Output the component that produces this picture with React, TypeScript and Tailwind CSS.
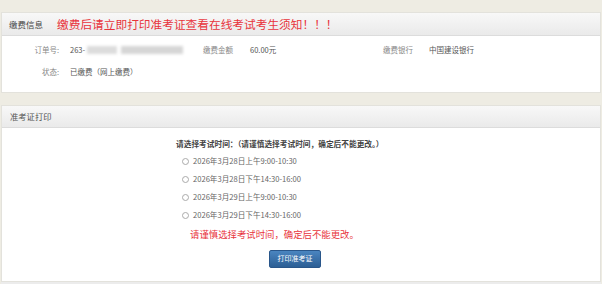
import React from "react";

const font = { fontFamily: '"Noto Sans CJK SC", "Noto Sans", sans-serif' };

const options = [
  "2026年3月28日上午9:00-10:30",
  "2026年3月28日下午14:30-16:00",
  "2026年3月29日上午9:00-10:30",
  "2026年3月29日下午14:30-16:00",
];

export default function App() {
  return (
    <div
      className="w-[602px] h-[284px] overflow-hidden bg-[#eeece3] pt-[12px] px-px flex flex-col"
      style={font}
    >
      {/* Panel 1 */}
      <div className="border border-[#e3e2dc]">
        <div className="h-[23px] bg-gradient-to-b from-[#f8f8f8] to-[#eaeaea] border-b border-[#dcdcdc] flex items-center pl-[7px]">
          <span className="text-[8.5px] text-[#444] w-[48px]">缴费信息</span>
          <span className="text-[11.7px] text-[#e8343c] leading-none">
            缴费后请立即打印准考证查看在线考试考生须知！！！
          </span>
        </div>
        <div className="h-[56px] bg-white flex flex-col pt-[7px] gap-[9px] text-[7.5px] leading-[13px]">
          <div className="flex items-center">
            <span className="w-[57px] text-right text-[#888]">订单号:</span>
            <span className="ml-[11px] w-[133px] flex items-center text-[#555]">
              263-
              <span className="ml-[2px] h-[8px] w-[30px] bg-[#dcdcdc] blur-[1.5px]" />
              <span className="ml-[4px] h-[8px] w-[62px] bg-[#d6d6d6] blur-[1.5px]" />
            </span>
            <span className="w-[47px] text-[#888]">缴费金额</span>
            <span className="w-[133px] text-[#555]">60.00元</span>
            <span className="w-[46px] text-[#888]">缴费银行</span>
            <span className="text-[#555]">中国建设银行</span>
          </div>
          <div className="flex items-center">
            <span className="w-[57px] text-right text-[#888]">状态:</span>
            <span className="ml-[11px] text-[#555]">已缴费（网上缴费）</span>
          </div>
        </div>
      </div>

      <div className="h-[12px]" />

      {/* Panel 2 */}
      <div className="flex-1 border border-[#e3e2dc] flex flex-col">
        <div className="h-[22px] bg-gradient-to-b from-[#f8f8f8] to-[#eaeaea] border-b border-[#dcdcdc] flex items-center pl-[8px]">
          <span className="text-[8.3px] text-[#555]">准考证打印</span>
        </div>
        <div className="flex-1 bg-white pl-[174px] pt-[10px] flex flex-col">
          <div className="text-[7.7px] font-semibold text-[#444] leading-[12px]">
            请选择考试时间：（请谨慎选择考试时间，确定后不能更改。）
          </div>
          <div className="mt-[2px] flex flex-col pl-[6px]">
            {options.map((o) => (
              <div key={o} className="h-[18px] flex items-center text-[7.6px] text-[#666]">
                <span className="w-[7px] h-[7px] rounded-full border border-[#aaa] bg-white" />
                <span className="ml-[4px]">{o}</span>
              </div>
            ))}
          </div>
          <div className="mt-[4px] pl-[14px] text-[9.4px] text-[#e8343c] leading-[12px]">
            请谨慎选择考试时间，确定后不能更改。
          </div>
          <div className="mt-[2px] pl-[93px]">
            <button className="w-[52px] h-[18px] rounded-[2px] bg-gradient-to-b from-[#4a85c0] to-[#2c5f95] border border-[#29568a] text-white text-[7px] leading-none">
              打印准考证
            </button>
          </div>
        </div>
      </div>
      <div className="h-[2px] bg-[#ececec]" />
    </div>
  );
}
